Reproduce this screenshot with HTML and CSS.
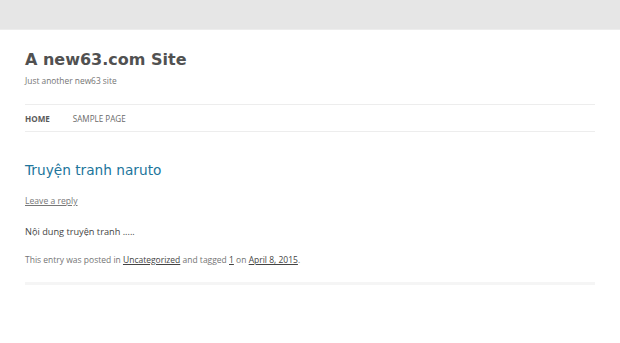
FILE: index.html
```html
<!DOCTYPE html>
<html lang="vi">

<head>
    <meta charset="UTF-8">
    <meta name="viewport" content="width=device-width, initial-scale=1.0">
    <title>A new63.com Site</title>
    <link rel="stylesheet" href="styles.css">
</head>

<body>
    <div class="topbar"></div>

    <div class="site">
        <header class="site-header">
            <h1 class="site-title"><a href="#">A new63.com Site</a></h1>
            <h2 class="site-description">Just another new63 site</h2>

            <nav class="main-nav">
                <a href="#" class="current">Home</a>
                <a href="#">Sample Page</a>
            </nav>
        </header>

        <article class="post">
            <h1 class="entry-title"><a href="#">Truyện tranh naruto</a></h1>
            <div class="comments-link"><a href="#">Leave a reply</a></div>
            <div class="entry-content">
                <p>Nội dung truyện tranh .....</p>
            </div>
            <footer class="entry-meta">
                This entry was posted in <a href="#">Uncategorized</a> and tagged <a href="#">1</a> on <a href="#">April 8, 2015</a>.
            </footer>
        </article>
    </div>
</body>

</html>
```

FILE: styles.css
```css
body {
    font-family: 'Open Sans', 'DejaVu Sans', sans-serif;
    margin: 0;
    padding: 0;
    background: #fff;
    color: #444;
}

a {
    color: #21759b;
    text-decoration: none;
}

.topbar {
    height: 29px;
    background-color: #e6e6e6;
    border-bottom: 1px solid #ededed;
}

.site {
    margin: 0 25px;
}

.site-header {
    padding-top: 20px;
}

.site-title {
    font-family: 'DejaVu Sans', Verdana, sans-serif;
    font-size: 16px;
    line-height: 20px;
    margin: 0;
}

.site-title a {
    color: #515151;
}

.site-description {
    font-size: 8.4px;
    font-weight: normal;
    color: #757575;
    line-height: 12px;
    margin: 5px 0 0;
}

.main-nav {
    display: flex;
    gap: 23px;
    margin-top: 17px;
    border-top: 1px solid #ededed;
    border-bottom: 1px solid #ededed;
    height: 26px;
    align-items: center;
}

.main-nav a {
    font-size: 8.1px;
    text-transform: uppercase;
    color: #6a6a6a;
}

.main-nav a.current {
    color: #5a5a5a;
    font-weight: bold;
}

.post {
    padding-top: 28px;
    border-bottom: 3px solid #f5f5f5;
    padding-bottom: 17px;
}

.entry-title {
    font-family: 'DejaVu Sans', Verdana, sans-serif;
    font-size: 13.7px;
    font-weight: normal;
    line-height: 20px;
    margin: 0;
}

.comments-link {
    margin-top: 15px;
    font-size: 8.6px;
}

.comments-link a {
    color: #777;
    text-decoration: underline;
}

.entry-content p {
    font-size: 9.2px;
    color: #444;
    margin: 18px 0 0;
}

.entry-meta {
    margin-top: 16px;
    font-size: 8.5px;
    color: #757575;
}

.entry-meta a {
    color: #444;
    text-decoration: underline;
}
```
